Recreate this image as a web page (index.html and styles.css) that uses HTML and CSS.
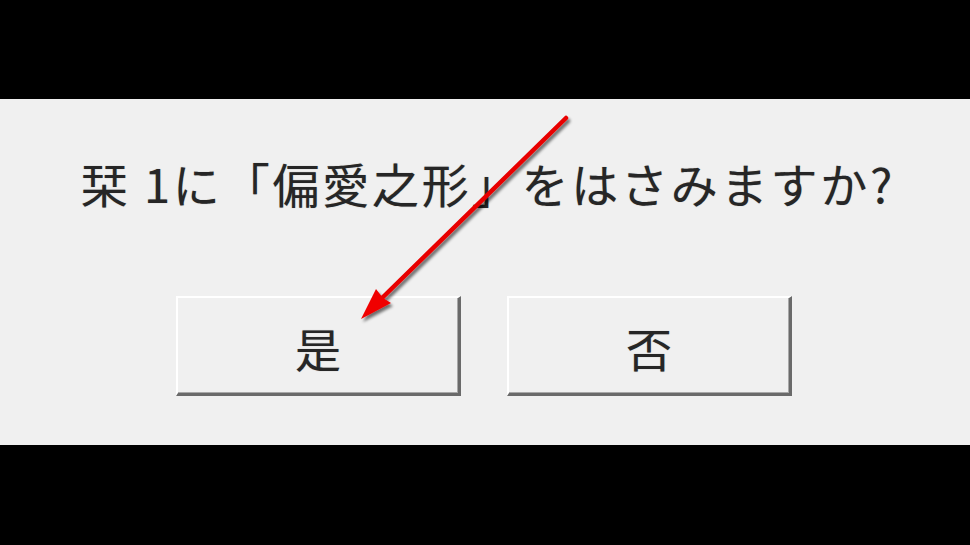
FILE: index.html
```html
<!DOCTYPE html>
<html lang="ja">
<head>
<meta charset="utf-8">
<title>栞</title>
<link rel="stylesheet" href="styles.css">
</head>
<body>
<div class="screen">
  <div class="bar-top"></div>
  <div class="dialog">
    <p class="message">栞 1に「偏愛之形」をはさみますか?</p>
    <div class="buttons">
      <button class="btn">是</button>
      <button class="btn">否</button>
    </div>
  </div>
  <div class="bar-bottom"></div>
  <svg class="arrow" width="970" height="545" viewBox="0 0 970 545">
    <defs>
      <filter id="sh" x="-20%" y="-20%" width="140%" height="140%">
        <feGaussianBlur in="SourceAlpha" stdDeviation="1.6"/>
        <feOffset dx="2" dy="3" result="b"/>
        <feComponentTransfer><feFuncA type="linear" slope="0.55"/></feComponentTransfer>
        <feMerge><feMergeNode/><feMergeNode in="SourceGraphic"/></feMerge>
      </filter>
    </defs>
    <g filter="url(#sh)">
      <line x1="566" y1="118" x2="380" y2="300" stroke="#e80000" stroke-width="4.5" stroke-linecap="round"/>
      <polygon points="361,319 376,289 383,298 391,303" fill="#f00000"/>
    </g>
  </svg>
</div>
</body>
</html>
```
FILE: styles.css
```css
html, body {
  margin: 0;
  padding: 0;
  background: #000;
}
.screen {
  position: relative;
  width: 970px;
  height: 545px;
  display: flex;
  flex-direction: column;
  background: #000;
  overflow: hidden;
}
.bar-top {
  height: 99px;
  flex: none;
}
.dialog {
  height: 346px;
  flex: none;
  background: #f0f0f0;
  box-sizing: border-box;
  padding-top: 60px;
  display: flex;
  flex-direction: column;
  align-items: center;
}
.message {
  margin: 0;
  font-family: "Noto Sans CJK JP", "Noto Sans", sans-serif;
  font-size: 47px;
  line-height: 47px;
  letter-spacing: 2.8px;
  color: #262626;
  white-space: nowrap;
  padding-left: 6px;
  text-shadow: 0 0 1px rgba(0, 0, 0, 0.35);
}
.buttons {
  margin-top: 90px;
  display: flex;
  gap: 46px;
  margin-left: -2px;
}
.btn {
  width: 285px;
  height: 100px;
  box-sizing: border-box;
  margin: 0;
  padding: 2px 0 0 0;
  background: #f0f0f0;
  border-style: solid;
  border-width: 2px 3px 3px 2px;
  border-color: #ffffff #6a6a6a #6a6a6a #ffffff;
  box-shadow: inset -1px -1px 0 #a8a8a8;
  font-family: "Noto Sans CJK JP", "Noto Sans", sans-serif;
  font-size: 46px;
  line-height: 1;
  color: #262626;
  display: flex;
  align-items: center;
  justify-content: center;
  text-shadow: 0 0 1px rgba(0, 0, 0, 0.35);
}
.bar-bottom {
  flex: 1;
}
.arrow {
  position: absolute;
  left: 0;
  top: 0;
  pointer-events: none;
}
```
